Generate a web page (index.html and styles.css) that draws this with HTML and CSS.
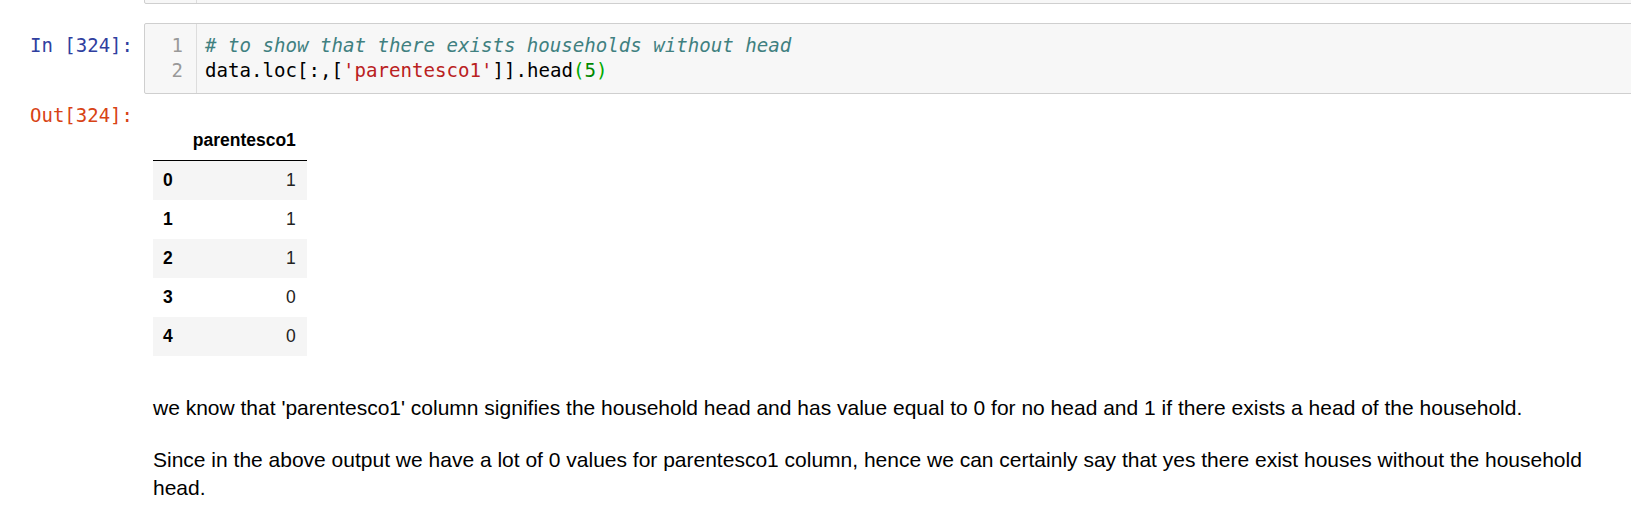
FILE: index.html
```html
<!DOCTYPE html>
<html>
<head>
<meta charset="utf-8">
<link rel="stylesheet" href="styles.css">
</head>
<body>
<div class="page">
  <div class="cell prev-cell">
    <div class="prompt"></div>
    <div class="box prev-box">
      <div class="gutter"></div>
      <div class="code"></div>
    </div>
  </div>

  <div class="cell code-cell">
    <div class="prompt in-prompt">In&nbsp;[324]:</div>
    <div class="box">
      <div class="gutter">
        <div class="ln">1</div>
        <div class="ln">2</div>
      </div>
      <div class="code">
        <div class="line"><span class="cm"># to show that there exists households without head</span></div>
        <div class="line">data.loc[:,[<span class="str">'parentesco1'</span>]].head<span class="br">(</span><span class="num">5</span><span class="br">)</span></div>
      </div>
    </div>
  </div>

  <div class="cell out-cell">
    <div class="prompt out-prompt">Out[324]:</div>
    <div class="out-area">
      <table class="df">
        <thead>
          <tr><th></th><th class="val">parentesco1</th></tr>
        </thead>
        <tbody>
          <tr><th>0</th><td>1</td></tr>
          <tr><th>1</th><td>1</td></tr>
          <tr><th>2</th><td>1</td></tr>
          <tr><th>3</th><td>0</td></tr>
          <tr><th>4</th><td>0</td></tr>
        </tbody>
      </table>
    </div>
  </div>

  <div class="cell md-cell">
    <div class="prompt"></div>
    <div class="md-area">
      <p>we know that 'parentesco1' column signifies the household head and has value equal to 0 for no head and 1 if there exists a head of the household.</p>
      <p>Since in the above output we have a lot of 0 values for parentesco1 column, hence we can certainly say that yes there exist houses without the household head.</p>
    </div>
  </div>
</div>
</body>
</html>
```

FILE: styles.css
```css
html, body {
  margin: 0;
  padding: 0;
  background: #fff;
  overflow: hidden;
}

body {
  font-family: "Liberation Sans", Arial, sans-serif;
  color: #000;
}

.page {
  width: 1680px;
}

.cell {
  display: flex;
  align-items: flex-start;
}

.prompt {
  flex: 0 0 144px;
  box-sizing: border-box;
  padding-right: 11px;
  text-align: right;
  font-family: "DejaVu Sans Mono", "Liberation Mono", monospace;
  font-size: 19px;
  line-height: 25px;
}

.box {
  flex: 1 1 auto;
  display: flex;
  border: 1px solid #cfcfcf;
  border-radius: 2px;
  background: #f7f7f7;
}

.prev-cell {
  margin-top: -10px;
}

.prev-box {
  height: 12px;
}

.gutter {
  flex: 0 0 52px;
  box-sizing: border-box;
  border-right: 1px solid #dddddd;
  padding: 9px 13px 10px 0;
  text-align: right;
  font-family: "DejaVu Sans Mono", "Liberation Mono", monospace;
  font-size: 19px;
  line-height: 25px;
  color: #999999;
}

.prev-box .gutter {
  padding: 0;
}

.code {
  flex: 1 1 auto;
  padding: 9px 0 10px 8px;
  font-family: "DejaVu Sans Mono", "Liberation Mono", monospace;
  font-size: 19.1px;
  line-height: 25px;
  color: #000;
}

.line {
  white-space: pre;
  height: 25px;
}

.code-cell {
  margin-top: 19px;
}

.in-prompt {
  padding-top: 10px;
  color: #303f9f;
}

.cm {
  color: #408080;
  font-style: italic;
}

.str {
  color: #ba2121;
}

.num {
  color: #008800;
}

.br {
  color: #00aa00;
}

.out-prompt {
  padding-top: 9px;
  color: #d84315;
}

.out-area {
  padding: 27px 0 0 9px;
}

.df {
  border-collapse: collapse;
  border-spacing: 0;
  font-size: 17.5px;
  color: #000;
}

.df th,
.df td {
  padding: 9px 11px 9px 10px;
  line-height: 21px;
  text-align: right;
  vertical-align: middle;
}

.df td {
  color: #222;
}

.df tbody th {
  text-align: left;
  font-weight: bold;
  padding-right: 10px;
}

.df thead th {
  font-weight: bold;
  border-bottom: 1px solid #000;
}

.df tbody tr:nth-child(odd) {
  background: #f5f5f5;
}

.md-area {
  flex: 0 0 auto;
  width: 1455px;
  padding: 38px 0 0 9px;
  font-size: 21px;
  line-height: 28px;
  color: #000;
}

.md-area p {
  margin: 0 0 24px 0;
}
```
